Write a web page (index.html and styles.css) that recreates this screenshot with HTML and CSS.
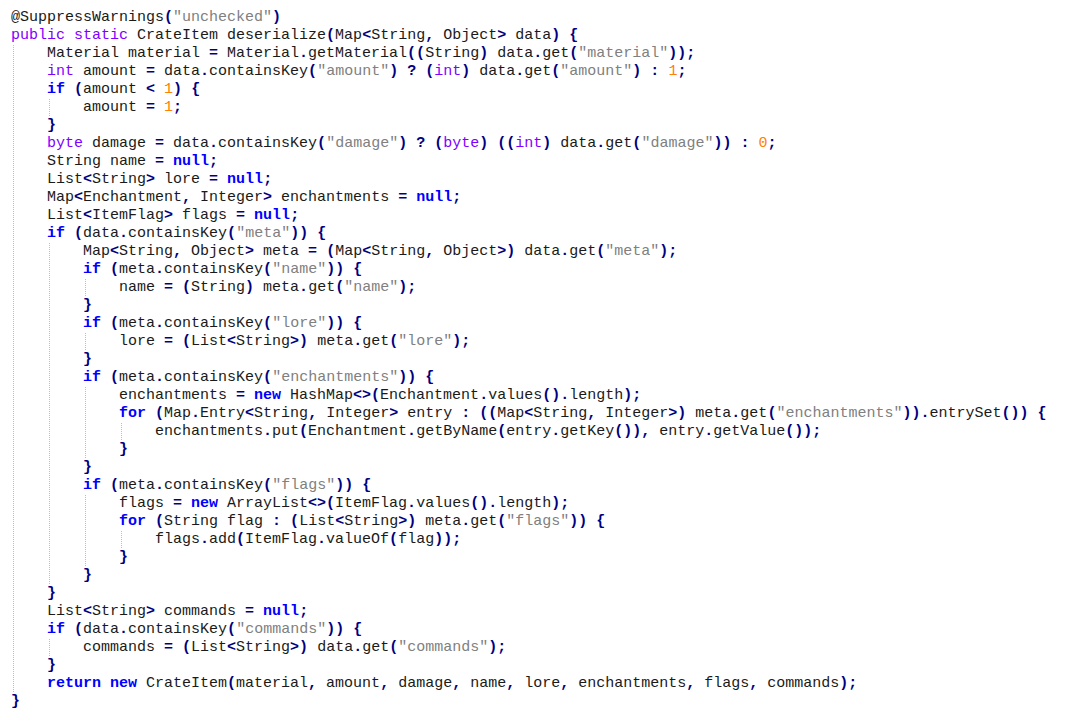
FILE: index.html
```html
<!DOCTYPE html>
<html>
<head>
<meta charset="utf-8">
<link rel="stylesheet" href="styles.css">
</head>
<body>
<div class="code">
<div class="ln">@SuppressWarnings<span class="o">(</span><span class="s">"unchecked"</span><span class="o">)</span></div>
<div class="ln"><span class="t">public</span> <span class="t">static</span> CrateItem deserialize<span class="o">(</span>Map<span class="o">&lt;</span>String<span class="o">,</span> Object<span class="o">&gt;</span> data<span class="o">)</span> <span class="o">{</span></div>
<div class="ln"><span class="i"></span>Material material <span class="o">=</span> Material<span class="o">.</span>getMaterial<span class="o">((</span>String<span class="o">)</span> data<span class="o">.</span>get<span class="o">(</span><span class="s">"material"</span><span class="o">));</span></div>
<div class="ln"><span class="i"></span><span class="t">int</span> amount <span class="o">=</span> data<span class="o">.</span>containsKey<span class="o">(</span><span class="s">"amount"</span><span class="o">)</span> <span class="o">?</span> <span class="o">(</span><span class="t">int</span><span class="o">)</span> data<span class="o">.</span>get<span class="o">(</span><span class="s">"amount"</span><span class="o">)</span> <span class="o">:</span> <span class="n">1</span><span class="o">;</span></div>
<div class="ln"><span class="i"></span><span class="k">if</span> <span class="o">(</span>amount <span class="o">&lt;</span> <span class="n">1</span><span class="o">)</span> <span class="o">{</span></div>
<div class="ln"><span class="i"></span><span class="i"></span>amount <span class="o">=</span> <span class="n">1</span><span class="o">;</span></div>
<div class="ln"><span class="i"></span><span class="o">}</span></div>
<div class="ln"><span class="i"></span><span class="t">byte</span> damage <span class="o">=</span> data<span class="o">.</span>containsKey<span class="o">(</span><span class="s">"damage"</span><span class="o">)</span> <span class="o">?</span> <span class="o">(</span><span class="t">byte</span><span class="o">)</span> <span class="o">((</span><span class="t">int</span><span class="o">)</span> data<span class="o">.</span>get<span class="o">(</span><span class="s">"damage"</span><span class="o">))</span> <span class="o">:</span> <span class="n">0</span><span class="o">;</span></div>
<div class="ln"><span class="i"></span>String name <span class="o">=</span> <span class="k">null</span><span class="o">;</span></div>
<div class="ln"><span class="i"></span>List<span class="o">&lt;</span>String<span class="o">&gt;</span> lore <span class="o">=</span> <span class="k">null</span><span class="o">;</span></div>
<div class="ln"><span class="i"></span>Map<span class="o">&lt;</span>Enchantment<span class="o">,</span> Integer<span class="o">&gt;</span> enchantments <span class="o">=</span> <span class="k">null</span><span class="o">;</span></div>
<div class="ln"><span class="i"></span>List<span class="o">&lt;</span>ItemFlag<span class="o">&gt;</span> flags <span class="o">=</span> <span class="k">null</span><span class="o">;</span></div>
<div class="ln"><span class="i"></span><span class="k">if</span> <span class="o">(</span>data<span class="o">.</span>containsKey<span class="o">(</span><span class="s">"meta"</span><span class="o">))</span> <span class="o">{</span></div>
<div class="ln"><span class="i"></span><span class="i"></span>Map<span class="o">&lt;</span>String<span class="o">,</span> Object<span class="o">&gt;</span> meta <span class="o">=</span> <span class="o">(</span>Map<span class="o">&lt;</span>String<span class="o">,</span> Object<span class="o">&gt;)</span> data<span class="o">.</span>get<span class="o">(</span><span class="s">"meta"</span><span class="o">);</span></div>
<div class="ln"><span class="i"></span><span class="i"></span><span class="k">if</span> <span class="o">(</span>meta<span class="o">.</span>containsKey<span class="o">(</span><span class="s">"name"</span><span class="o">))</span> <span class="o">{</span></div>
<div class="ln"><span class="i"></span><span class="i"></span><span class="i"></span>name <span class="o">=</span> <span class="o">(</span>String<span class="o">)</span> meta<span class="o">.</span>get<span class="o">(</span><span class="s">"name"</span><span class="o">);</span></div>
<div class="ln"><span class="i"></span><span class="i"></span><span class="o">}</span></div>
<div class="ln"><span class="i"></span><span class="i"></span><span class="k">if</span> <span class="o">(</span>meta<span class="o">.</span>containsKey<span class="o">(</span><span class="s">"lore"</span><span class="o">))</span> <span class="o">{</span></div>
<div class="ln"><span class="i"></span><span class="i"></span><span class="i"></span>lore <span class="o">=</span> <span class="o">(</span>List<span class="o">&lt;</span>String<span class="o">&gt;)</span> meta<span class="o">.</span>get<span class="o">(</span><span class="s">"lore"</span><span class="o">);</span></div>
<div class="ln"><span class="i"></span><span class="i"></span><span class="o">}</span></div>
<div class="ln"><span class="i"></span><span class="i"></span><span class="k">if</span> <span class="o">(</span>meta<span class="o">.</span>containsKey<span class="o">(</span><span class="s">"enchantments"</span><span class="o">))</span> <span class="o">{</span></div>
<div class="ln"><span class="i"></span><span class="i"></span><span class="i"></span>enchantments <span class="o">=</span> <span class="k">new</span> HashMap<span class="o">&lt;&gt;(</span>Enchantment<span class="o">.</span>values<span class="o">().</span>length<span class="o">);</span></div>
<div class="ln"><span class="i"></span><span class="i"></span><span class="i"></span><span class="k">for</span> <span class="o">(</span>Map<span class="o">.</span>Entry<span class="o">&lt;</span>String<span class="o">,</span> Integer<span class="o">&gt;</span> entry <span class="o">:</span> <span class="o">((</span>Map<span class="o">&lt;</span>String<span class="o">,</span> Integer<span class="o">&gt;)</span> meta<span class="o">.</span>get<span class="o">(</span><span class="s">"enchantments"</span><span class="o">)).</span>entrySet<span class="o">())</span> <span class="o">{</span></div>
<div class="ln"><span class="i"></span><span class="i"></span><span class="i"></span><span class="i"></span>enchantments<span class="o">.</span>put<span class="o">(</span>Enchantment<span class="o">.</span>getByName<span class="o">(</span>entry<span class="o">.</span>getKey<span class="o">()),</span> entry<span class="o">.</span>getValue<span class="o">());</span></div>
<div class="ln"><span class="i"></span><span class="i"></span><span class="i"></span><span class="o">}</span></div>
<div class="ln"><span class="i"></span><span class="i"></span><span class="o">}</span></div>
<div class="ln"><span class="i"></span><span class="i"></span><span class="k">if</span> <span class="o">(</span>meta<span class="o">.</span>containsKey<span class="o">(</span><span class="s">"flags"</span><span class="o">))</span> <span class="o">{</span></div>
<div class="ln"><span class="i"></span><span class="i"></span><span class="i"></span>flags <span class="o">=</span> <span class="k">new</span> ArrayList<span class="o">&lt;&gt;(</span>ItemFlag<span class="o">.</span>values<span class="o">().</span>length<span class="o">);</span></div>
<div class="ln"><span class="i"></span><span class="i"></span><span class="i"></span><span class="k">for</span> <span class="o">(</span>String flag <span class="o">:</span> <span class="o">(</span>List<span class="o">&lt;</span>String<span class="o">&gt;)</span> meta<span class="o">.</span>get<span class="o">(</span><span class="s">"flags"</span><span class="o">))</span> <span class="o">{</span></div>
<div class="ln"><span class="i"></span><span class="i"></span><span class="i"></span><span class="i"></span>flags<span class="o">.</span>add<span class="o">(</span>ItemFlag<span class="o">.</span>valueOf<span class="o">(</span>flag<span class="o">));</span></div>
<div class="ln"><span class="i"></span><span class="i"></span><span class="i"></span><span class="o">}</span></div>
<div class="ln"><span class="i"></span><span class="i"></span><span class="o">}</span></div>
<div class="ln"><span class="i"></span><span class="o">}</span></div>
<div class="ln"><span class="i"></span>List<span class="o">&lt;</span>String<span class="o">&gt;</span> commands <span class="o">=</span> <span class="k">null</span><span class="o">;</span></div>
<div class="ln"><span class="i"></span><span class="k">if</span> <span class="o">(</span>data<span class="o">.</span>containsKey<span class="o">(</span><span class="s">"commands"</span><span class="o">))</span> <span class="o">{</span></div>
<div class="ln"><span class="i"></span><span class="i"></span>commands <span class="o">=</span> <span class="o">(</span>List<span class="o">&lt;</span>String<span class="o">&gt;)</span> data<span class="o">.</span>get<span class="o">(</span><span class="s">"commands"</span><span class="o">);</span></div>
<div class="ln"><span class="i"></span><span class="o">}</span></div>
<div class="ln"><span class="i"></span><span class="k">return</span> <span class="k">new</span> CrateItem<span class="o">(</span>material<span class="o">,</span> amount<span class="o">,</span> damage<span class="o">,</span> name<span class="o">,</span> lore<span class="o">,</span> enchantments<span class="o">,</span> flags<span class="o">,</span> commands<span class="o">);</span></div>
<div class="ln"><span class="o">}</span></div>
</div>
</body>
</html>
```
FILE: styles.css
```css
html, body {
  margin: 0;
  padding: 0;
  background: #ffffff;
}

.code {
  padding: 9px 0 0 11px;
  font-family: "Liberation Mono", "Courier New", monospace;
  font-size: 15px;
  line-height: 18px;
  color: #1a1a1a;
}

.ln {
  height: 18px;
  white-space: pre;
}

.i {
  display: inline-block;
  width: 36px;
  height: 18px;
  vertical-align: top;
  background-image: repeating-linear-gradient(to bottom, #bdbdbd 0 1px, transparent 1px 2px);
  background-size: 1px 100%;
  background-position: 2px 0;
  background-repeat: no-repeat;
}

.k {
  color: #0000ff;
  font-weight: bold;
}

.t {
  color: #8000ff;
}

.o {
  color: #000080;
  font-weight: bold;
}

.s {
  color: #808080;
}

.n {
  color: #ff8000;
}
```
